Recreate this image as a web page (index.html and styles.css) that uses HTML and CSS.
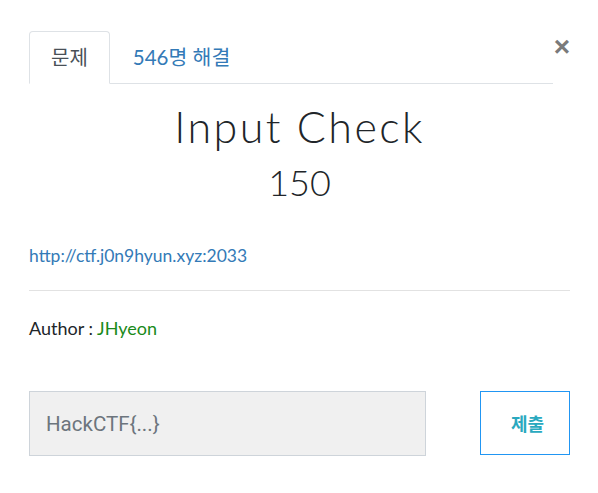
FILE: index.html
```html
<!DOCTYPE html>
<html>
<head>
<meta charset="utf-8">
<link rel="stylesheet" href="styles.css">
</head>
<body>
<div class="modal">
  <div class="header">
    <ul class="tabs">
      <li class="tab active">문제</li>
      <li class="tab link">546명 해결</li>
    </ul>
    <button class="close" aria-label="Close">&times;</button>
  </div>
  <h2 class="title">Input Check</h2>
  <h3 class="points">150</h3>
  <p class="desc"><a href="#" class="url">http://ctf.j0n9hyun.xyz:2033</a></p>
  <hr class="rule">
  <p class="author">Author : <span class="name">JHyeon</span></p>
  <div class="submit-row">
    <input class="flag" type="text" placeholder="HackCTF{...}">
    <button class="submit">제출</button>
  </div>
</div>
</body>
</html>
```
FILE: styles.css
```css
html, body {
  margin: 0;
  padding: 0;
  background: #fff;
}
body {
  font-family: Lato, "Noto Sans CJK KR", sans-serif;
  color: #212529;
}
.modal {
  padding: 31px 28px 0 29px;
}
.header {
  display: flex;
  align-items: flex-start;
}
.tabs {
  flex: 1;
  display: flex;
  list-style: none;
  margin: 0;
  padding: 0;
  border-bottom: 1px solid #dee2e6;
}
.tab {
  font-family: "Noto Sans CJK KR", Lato, sans-serif;
  font-size: 20px;
  line-height: 26px;
  padding: 12px 21px 13px 21px;
  margin-bottom: -1px;
  border: 1px solid transparent;
  border-radius: 4px 4px 0 0;
}
.tab.active {
  color: #495057;
  border-color: #dee2e6 #dee2e6 #fff;
  background: #fff;
}
.tab.link {
  color: #337ab7;
  font-family: Lato, "Noto Sans CJK KR", sans-serif;
  font-size: 20.5px;
  padding-left: 22px;
}
.close {
  border: 0;
  background: none;
  padding: 0;
  width: 17px;
  margin-top: 4px;
  font-family: "Liberation Sans", sans-serif;
  font-size: 28px;
  font-weight: bold;
  line-height: 24px;
  color: #7a7a7a;
  text-align: right;
}
.title {
  margin: 18px 0 0 0;
  text-align: center;
  font-weight: 300;
  font-size: 43px;
  letter-spacing: 2.4px;
  line-height: 50px;
}
.points {
  margin: 8px 0 0 0;
  text-align: center;
  font-weight: 300;
  font-size: 36px;
  line-height: 44px;
}
.desc {
  margin: 40px 0 0 0;
  font-size: 17.5px;
  line-height: 24px;
}
.url {
  color: #337ab7;
  text-decoration: none;
}
.rule {
  border: 0;
  border-top: 1px solid #e2e2e2;
  margin: 22px 0 0 0;
}
.author {
  margin: 25px 0 0 0;
  font-size: 18px;
  line-height: 24px;
  color: #212529;
}
.name {
  color: #1a8a1a;
}
.submit-row {
  display: flex;
  justify-content: space-between;
  margin-top: 51px;
}
.flag {
  box-sizing: border-box;
  width: 397px;
  height: 65px;
  margin: 0;
  padding: 0 16px;
  background: #f0f0f0;
  border: 1px solid #ced4da;
  font-family: Roboto, "Liberation Sans", sans-serif;
  font-size: 20.5px;
  color: #495057;
  outline: none;
}
.flag::placeholder {
  color: #6c757d;
  opacity: 1;
}
.submit {
  box-sizing: border-box;
  width: 90px;
  height: 64px;
  margin: 0;
  padding: 0 0 0 5px;
  background: #fff;
  border: 1px solid #2196f3;
  font-family: "Noto Sans CJK KR", sans-serif;
  font-weight: bold;
  font-size: 18px;
  color: #2aa9bf;
}
```
